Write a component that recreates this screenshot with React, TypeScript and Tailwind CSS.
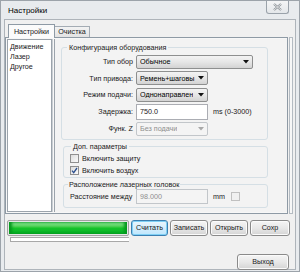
import type { ReactNode } from "react"

const font = { fontFamily: '"Liberation Sans", Arial, sans-serif' }

function Combo({ text, w, disabled }: { text: string; w: string; disabled?: boolean }) {
  return (
    <div
      className={`${w} h-[14px] flex items-center justify-between rounded-[2px] border pl-[3px] pr-[3px] ${
        disabled
          ? "border-[#c2c6ca] bg-[#f4f4f4] text-[#8f8f8f]"
          : "border-[#8e8f8f] bg-gradient-to-b from-[#f3f3f3] via-[#e6e6e6] to-[#d3d3d3] text-black"
      }`}
    >
      <span className="whitespace-nowrap overflow-hidden">{text}</span>
      <svg width="6" height="4" viewBox="0 0 6 4" className="shrink-0">
        <path d="M0 0h6L3 3.5z" fill={disabled ? "#a8a8a8" : "#111"} />
      </svg>
    </div>
  )
}

function Row({ label, children }: { label: string; children: ReactNode }) {
  return (
    <div className="flex items-center h-[15px]">
      <div className="w-[70px] text-right pr-[3px] whitespace-nowrap">{label}</div>
      {children}
    </div>
  )
}

function Button({ text, w, focused }: { text: string; w: string; focused?: boolean }) {
  return (
    <div
      className={`${w} h-[16px] flex items-center justify-center rounded-[3px] border shrink-0 ${
        focused
          ? "border-[#3c7fb1] bg-gradient-to-b from-[#eaf6fd] to-[#bee6fd] shadow-[inset_0_0_0_1px_#7fd0f5]"
          : "border-[#8a8a8a] bg-gradient-to-b from-[#f5f5f5] via-[#e8e8e8] to-[#d4d4d4] shadow-[inset_0_0_0_1px_#fbfbfb]"
      }`}
    >
      {text}
    </div>
  )
}

function Check({ checked, label }: { checked?: boolean; label: string }) {
  return (
    <div className="flex items-center h-[11px] gap-[3px]">
      <div className="w-[9px] h-[9px] border border-[#8f8f8f] bg-gradient-to-br from-[#dcdcdc] to-[#fbfbfb] flex items-center justify-center">
        {checked && (
          <svg width="7" height="7" viewBox="0 0 7 7">
            <path d="M1 3.6l1.7 2L6 1" stroke="#2b4f8e" strokeWidth="1.3" fill="none" />
          </svg>
        )}
      </div>
      <span>{label}</span>
    </div>
  )
}

export default function App() {
  return (
    <div
      className="w-[300px] h-[272px] bg-[#e8ebee] border border-[#9ca3aa] flex flex-col text-[7.2px] leading-none text-[#1a1a1a]"
      style={font}
    >
      <div className="h-[18px] flex items-start justify-between shrink-0">
        <div className="pl-[7px] pt-[6px] text-[8px] text-black">Настройки</div>
        <div className="w-[23px] h-[13px] mr-[10px] border border-t-0 border-[#9aa2aa] rounded-b-[3px] bg-gradient-to-b from-[#f4f5f6] to-[#e4e7ea] flex items-center justify-center">
          <svg width="9" height="8" viewBox="0 0 9 8">
            <path d="M1 1l7 6M8 1L1 7" stroke="#8a9096" strokeWidth="2.2" />
            <path d="M1 1l7 6M8 1L1 7" stroke="#f4f4f4" strokeWidth="0.8" />
          </svg>
        </div>
      </div>

      <div className="mx-[3px] h-[251px] border border-[#aeb4ba] bg-[#f0f0f0] flex flex-col">
        <div className="h-[17px] flex items-end pl-[3px] shrink-0">
          <div className="h-[14px] w-[47px] border border-b-0 border-[#8e9aa5] bg-[#fbfbfb] flex items-center justify-center -mb-[1px] relative z-10">
            Настройки
          </div>
          <div className="h-[11px] w-[35px] border border-l-0 border-b-0 border-[#a4acb4] bg-gradient-to-b from-[#f3f3f3] to-[#e3e3e3] flex items-center justify-center">
            Очистка
          </div>
        </div>

        <div className="flex h-[177px] shrink-0">
          <div className="w-[283px] border border-[#8e9aa5] bg-[#f7f7f7] flex pt-[1px] pb-[1px] pl-[1px]">
            <div className="w-[45px] border border-[#9ba3ab] bg-white flex flex-col pl-[2px] pt-[3px] gap-[3px]">
              <div>Движение</div>
              <div>Лазер</div>
              <div>Другое</div>
            </div>
            <div className="w-[2px] border-l border-[#c9ced3]" />
            <div className="flex-1 border-l border-[#9ba3ab] flex flex-col pl-[6px] pr-[19px] pt-[5px] gap-[3px] bg-[#f3f3f3]">
              <fieldset className="border border-[#d5dfe5] rounded-[3px] h-[96px] px-[4px]">
                <legend className="px-[2px] ml-[1px]">Конфигурация оборудования</legend>
                <div className="flex flex-col gap-[1.5px] pt-[3px]">
                  <Row label="Тип обор">
                    <Combo text="Обычное" w="w-[117px]" />
                  </Row>
                  <Row label="Тип привода:">
                    <Combo text="Ремень+шаговы" w="w-[72px]" />
                  </Row>
                  <Row label="Режим подачи:">
                    <Combo text="Однонаправлен" w="w-[72px]" />
                  </Row>
                  <div className="flex items-center h-[16px]">
                    <div className="w-[70px] text-right pr-[3px]">Задержка:</div>
                    <div className="w-[72px] h-[16px] border border-[#abadb3] bg-white flex items-center pl-[3px]">
                      750.0
                    </div>
                    <div className="pl-[5px]">ms (0-3000)</div>
                  </div>
                  <Row label="Функ. Z">
                    <Combo text="Без подачи" w="w-[72px]" disabled />
                  </Row>
                </div>
              </fieldset>
              <fieldset className="border border-[#d5dfe5] rounded-[3px] h-[35px] ml-[2px] px-[6px]">
                <legend className="px-[2px] ml-[1px]">Доп. параметры</legend>
                <div className="flex flex-col gap-[1px] pt-[3px]">
                  <Check label="Включить защиту" />
                  <Check label="Включить воздух" checked />
                </div>
              </fieldset>
              <fieldset className="border border-[#d5dfe5] rounded-[3px] h-[27px] ml-[2px] px-[4px]">
                <legend className="px-[1px]">Расположение лазерных головок</legend>
                <div className="flex items-center pt-[1px]">
                  <div className="w-[68px] pl-[2px] whitespace-nowrap">Расстояние между</div>
                  <div className="w-[72px] h-[15px] border border-[#c2c6ca] bg-[#f4f4f4] text-[#8f8f8f] flex items-center pl-[3px]">
                    98.000
                  </div>
                  <div className="pl-[5px] w-[23px]">mm</div>
                  <div className="w-[9px] h-[9px] border border-[#c0c0c0] bg-[#f0f0f0]" />
                </div>
              </fieldset>
            </div>
          </div>
          <div className="ml-[1px] w-[4px] border border-[#b4bbc2] bg-[#f7f7f7]" />
        </div>

        <div className="flex items-start pl-[2px] pt-[6px] gap-[2px] shrink-0">
          <div className="flex flex-col gap-[1px] shrink-0">
            <div className="w-[122px] h-[16px] border border-[#a2a2a2] rounded-[2px] bg-[#e6e6e6] p-[1px]">
              <div className="w-full h-full bg-gradient-to-b from-[#9ef0a6] via-[#14c42a] to-[#06b025] shadow-[inset_3px_0_3px_#05991e,inset_-3px_0_3px_#05991e]" />
            </div>
            <div className="ml-[3px] w-[119px] h-[5px] border border-[#a8a8a8] border-r-0 bg-white" />
          </div>
          <Button text="Считать" w="w-[37px]" focused />
          <Button text="Записать" w="w-[38px]" />
          <Button text="Открыть" w="w-[38px]" />
          <Button text="Сохр" w="w-[40px]" />
        </div>

        <div className="flex justify-end pr-[6px] pt-[12px]">
          <Button text="Выход" w="w-[52px]" />
        </div>
      </div>
    </div>
  )
}
